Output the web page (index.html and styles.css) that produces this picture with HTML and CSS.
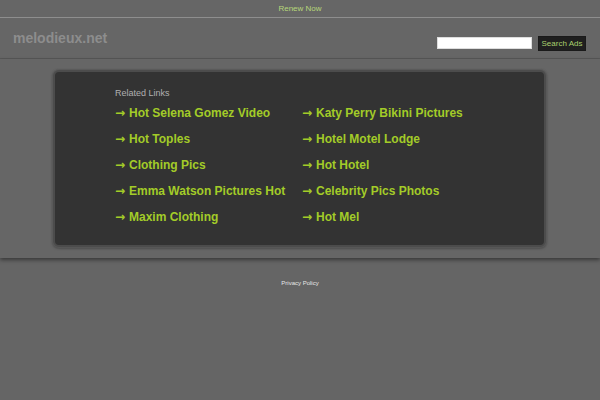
FILE: index.html
```html
<!DOCTYPE html>
<html>
<head>
<meta charset="utf-8">
<link rel="stylesheet" href="styles.css">
</head>
<body>
<div class="topbar"><a href="#">Renew Now</a></div>
<div class="header">
  <div class="logo">melodieux.net</div>
  <form class="search">
    <input type="text" class="search-input">
    <button type="button" class="search-btn">Search Ads</button>
  </form>
</div>
<div class="main">
  <div class="card">
    <div class="card-title">Related Links</div>
    <div class="links">
      <a href="#" class="link"><span class="arrow">&#x2192;</span>Hot Selena Gomez Video</a>
      <a href="#" class="link"><span class="arrow">&#x2192;</span>Katy Perry Bikini Pictures</a>
      <a href="#" class="link"><span class="arrow">&#x2192;</span>Hot Toples</a>
      <a href="#" class="link"><span class="arrow">&#x2192;</span>Hotel Motel Lodge</a>
      <a href="#" class="link"><span class="arrow">&#x2192;</span>Clothing Pics</a>
      <a href="#" class="link"><span class="arrow">&#x2192;</span>Hot Hotel</a>
      <a href="#" class="link"><span class="arrow">&#x2192;</span>Emma Watson Pictures Hot</a>
      <a href="#" class="link"><span class="arrow">&#x2192;</span>Celebrity Pics Photos</a>
      <a href="#" class="link"><span class="arrow">&#x2192;</span>Maxim Clothing</a>
      <a href="#" class="link"><span class="arrow">&#x2192;</span>Hot Mel</a>
    </div>
  </div>
</div>
<div class="footer"><a href="#">Privacy Policy</a></div>
</body>
</html>
```
FILE: styles.css
```css
html, body {
  margin: 0;
  padding: 0;
  background: #656565;
  font-family: "Liberation Sans", Arial, sans-serif;
}
.topbar {
  height: 17px;
  line-height: 18px;
  text-align: center;
  font-size: 8px;
  background: #666;
  border-bottom: 1px solid #8e8e8e;
}
.topbar a {
  color: #b6d67a;
  text-decoration: none;
}
.header {
  height: 40px;
  background: #666;
  border-bottom: 1px solid #585858;
  display: flex;
  justify-content: space-between;
  padding: 0 14px 0 13px;
}
.logo {
  font-size: 14px;
  font-weight: bold;
  color: #8d8d8d;
  padding-top: 12px;
}
.search {
  display: flex;
  align-items: center;
  gap: 6px;
  margin: 0;
  padding-top: 10px;
}
.search-input {
  width: 95px;
  height: 12px;
  box-sizing: border-box;
  border: 1px solid #ddd;
  background: #fff;
  padding: 0;
  margin: 0;
}
.search-btn {
  height: 15px;
  width: 48px;
  padding: 0;
  margin: 0;
  border: 1px solid #1a1a1a;
  background: #1f1f1f;
  color: #a9cf6e;
  font-family: "Liberation Sans", Arial, sans-serif;
  font-size: 8px;
  line-height: 13px;
}
.main {
  background: #666;
  padding: 11px 0 11px;
  box-shadow: 0 2px 4px rgba(0, 0, 0, 0.45);
  position: relative;
}
.card {
  width: 493px;
  height: 177px;
  box-sizing: border-box;
  margin: 0 0 0 53px;
  background: #333;
  border: 2px solid #4c4c4c;
  border-radius: 6px;
  box-shadow: 0 0 1px 1px #5a5a5a, 0 1px 3px rgba(0, 0, 0, 0.5);
  padding: 15px 0 0 60px;
}
.card-title {
  font-size: 9px;
  color: #b0b0b0;
  line-height: 12px;
  margin-bottom: 6px;
}
.links {
  display: grid;
  grid-template-columns: 187px 200px;
  grid-auto-rows: 26px;
}
.link {
  font-size: 12px;
  font-weight: bold;
  color: #a3cc28;
  text-decoration: none;
  line-height: 16px;
  white-space: nowrap;
  display: flex;
  align-items: center;
  height: 16px;
}
.arrow {
  display: inline-block;
  width: 14px;
  font-family: "DejaVu Sans", sans-serif;
  font-size: 12px;
  font-weight: bold;
}
.footer {
  text-align: center;
  padding-top: 22px;
  font-size: 6px;
}
.footer a {
  color: #e6e6e6;
}
```
